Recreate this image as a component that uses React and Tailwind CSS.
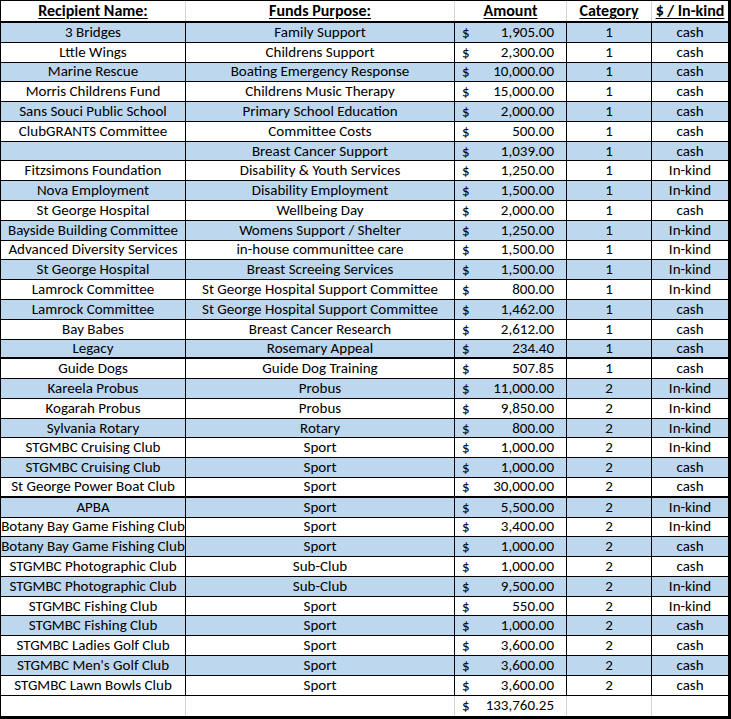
import React from "react";

const rows = [
  ["3 Bridges", "Family Support", "1,905.00", "1", "cash"],
  ["Lttle Wings", "Childrens Support", "2,300.00", "1", "cash"],
  ["Marine Rescue", "Boating Emergency Response", "10,000.00", "1", "cash"],
  ["Morris Childrens Fund", "Childrens Music Therapy", "15,000.00", "1", "cash"],
  ["Sans Souci Public School", "Primary School Education", "2,000.00", "1", "cash"],
  ["ClubGRANTS Committee", "Committee Costs", "500.00", "1", "cash"],
  ["", "Breast Cancer Support", "1,039.00", "1", "cash"],
  ["Fitzsimons Foundation", "Disability & Youth Services", "1,250.00", "1", "In-kind"],
  ["Nova Employment", "Disability Employment", "1,500.00", "1", "In-kind"],
  ["St George Hospital", "Wellbeing Day", "2,000.00", "1", "cash"],
  ["Bayside Building Committee", "Womens Support / Shelter", "1,250.00", "1", "In-kind"],
  ["Advanced Diversity Services", "in-house communittee care", "1,500.00", "1", "In-kind"],
  ["St George Hospital", "Breast Screeing Services", "1,500.00", "1", "In-kind"],
  ["Lamrock Committee", "St George Hospital Support Committee", "800.00", "1", "In-kind"],
  ["Lamrock Committee", "St George Hospital Support Committee", "1,462.00", "1", "cash"],
  ["Bay Babes", "Breast Cancer Research", "2,612.00", "1", "cash"],
  ["Legacy", "Rosemary Appeal", "234.40", "1", "cash"],
  ["Guide Dogs", "Guide Dog Training", "507.85", "1", "cash"],
  ["Kareela Probus", "Probus", "11,000.00", "2", "In-kind"],
  ["Kogarah Probus", "Probus", "9,850.00", "2", "In-kind"],
  ["Sylvania Rotary", "Rotary", "800.00", "2", "In-kind"],
  ["STGMBC Cruising Club", "Sport", "1,000.00", "2", "In-kind"],
  ["STGMBC Cruising Club", "Sport", "1,000.00", "2", "cash"],
  ["St George Power Boat Club", "Sport", "30,000.00", "2", "cash"],
  ["APBA", "Sport", "5,500.00", "2", "In-kind"],
  ["Botany Bay Game Fishing Club", "Sport", "3,400.00", "2", "In-kind"],
  ["Botany Bay Game Fishing Club", "Sport", "1,000.00", "2", "cash"],
  ["STGMBC Photographic Club", "Sub-Club", "1,000.00", "2", "cash"],
  ["STGMBC Photographic Club", "Sub-Club", "9,500.00", "2", "In-kind"],
  ["STGMBC Fishing Club", "Sport", "550.00", "2", "In-kind"],
  ["STGMBC Fishing Club", "Sport", "1,000.00", "2", "cash"],
  ["STGMBC Ladies Golf Club", "Sport", "3,600.00", "2", "cash"],
  ["STGMBC Men's Golf Club", "Sport", "3,600.00", "2", "cash"],
  ["STGMBC Lawn Bowls Club", "Sport", "3,600.00", "2", "cash"],
];

const thick = new Set([16, 23]);

export default function App() {
  return (
    <div className="w-[731px] h-[719px] bg-white font-['Carlito','Lato',sans-serif] text-[15px] text-black leading-none">
      <div className="w-[731px] h-[719px] flex flex-col border-l border-t border-r-[3px] border-b-[3px] border-black">
        {/* header */}
        <div className="flex h-[22px] shrink-0 border-b-2 border-black font-bold text-[16px]">
          <div className="w-[185px] shrink-0 flex items-center justify-center border-r border-[#d4d4d4]">
            <span className="underline underline-offset-2">Recipient Name:</span>
          </div>
          <div className="w-[269px] shrink-0 flex items-center justify-center border-r border-[#d4d4d4]">
            <span className="underline underline-offset-2">Funds Purpose:</span>
          </div>
          <div className="w-[112px] shrink-0 flex items-center justify-center border-r border-[#d4d4d4]">
            <span className="underline underline-offset-2">Amount</span>
          </div>
          <div className="w-[85px] shrink-0 flex items-center justify-center border-r border-[#d4d4d4]">
            <span className="underline underline-offset-2">Category</span>
          </div>
          <div className="flex-1 flex items-center justify-center">
            <span className="underline underline-offset-2">$ / In-kind</span>
          </div>
        </div>
        {/* body */}
        {rows.map((r, i) => (
          <div
            key={i}
            className={
              "flex h-[19.794px] shrink-0 border-black " +
              (thick.has(i) ? "border-b-2 " : "border-b ") +
              (i % 2 === 0 ? "bg-[#bdd7ee]" : "bg-white")
            }
          >
            <div className="w-[185px] shrink-0 flex items-center justify-center border-r border-black whitespace-nowrap overflow-hidden">
              {r[0]}
            </div>
            <div className="w-[269px] shrink-0 flex items-center justify-center border-r border-black whitespace-nowrap">
              {r[1]}
            </div>
            <div className="w-[112px] shrink-0 flex items-center justify-between pl-[7px] pr-[12px] border-r border-black">
              <span>$</span>
              <span>{r[2]}</span>
            </div>
            <div className="w-[85px] shrink-0 flex items-center justify-center border-r border-black">
              {r[3]}
            </div>
            <div className="flex-1 flex items-center justify-center">{r[4]}</div>
          </div>
        ))}
        {/* total */}
        <div className="flex flex-1 bg-white">
          <div className="w-[185px] shrink-0 border-r border-[#d4d4d4]" />
          <div className="w-[269px] shrink-0 border-r border-[#d4d4d4]" />
          <div className="w-[112px] shrink-0 flex items-center justify-between pl-[7px] pr-[12px] border-r border-[#d4d4d4]">
            <span>$</span>
            <span>133,760.25</span>
          </div>
          <div className="w-[85px] shrink-0 border-r border-[#d4d4d4]" />
          <div className="flex-1" />
        </div>
      </div>
    </div>
  );
}
